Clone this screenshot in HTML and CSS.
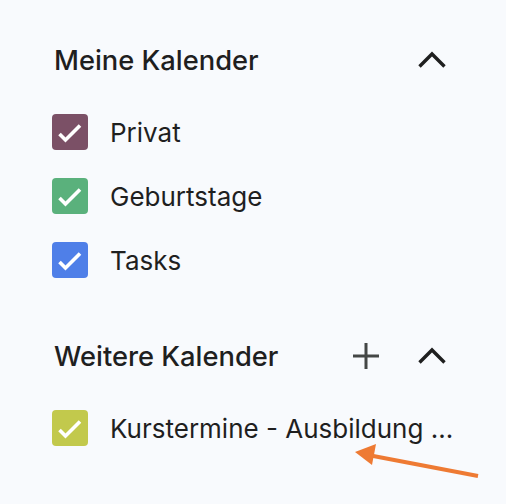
FILE: index.html
```html
<!DOCTYPE html>
<html lang="de">
<head>
    <meta charset="UTF-8">
    <meta name="viewport" content="width=device-width, initial-scale=1.0">
    <title>Kalender</title>
    <link rel="stylesheet" href="styles.css">
</head>
<body>
    <div class="sidebar">
        <div class="section">
            <div class="section-header">
                <h2>Meine Kalender</h2>
                <div class="actions">
                    <button class="icon-btn" aria-label="Einklappen">
                        <svg viewBox="0 0 48 48" width="48" height="48"><polyline points="11.5,30.5 24,18 36.5,30.5" fill="none" stroke="#1f1f1f" stroke-width="3.4"/></svg>
                    </button>
                </div>
            </div>
            <div class="cal-item">
                <span class="check privat"><svg viewBox="0 0 36 36" width="36" height="36"><polyline points="7.5,20 13.5,26 28,11.5" fill="none" stroke="#fff" stroke-width="3.6"/></svg></span>
                <span class="cal-name">Privat</span>
            </div>
            <div class="cal-item">
                <span class="check birthday"><svg viewBox="0 0 36 36" width="36" height="36"><polyline points="7.5,20 13.5,26 28,11.5" fill="none" stroke="#fff" stroke-width="3.6"/></svg></span>
                <span class="cal-name">Geburtstage</span>
            </div>
            <div class="cal-item">
                <span class="check tasks"><svg viewBox="0 0 36 36" width="36" height="36"><polyline points="7.5,20 13.5,26 28,11.5" fill="none" stroke="#fff" stroke-width="3.6"/></svg></span>
                <span class="cal-name">Tasks</span>
            </div>
        </div>

        <div class="section">
            <div class="section-header">
                <h2>Weitere Kalender</h2>
                <div class="actions">
                    <button class="icon-btn" aria-label="Hinzufügen">
                        <svg viewBox="0 0 48 48" width="48" height="48"><path d="M24 11v26M11 24h26" fill="none" stroke="#444746" stroke-width="3"/></svg>
                    </button>
                    <button class="icon-btn" aria-label="Einklappen">
                        <svg viewBox="0 0 48 48" width="48" height="48"><polyline points="11.5,30.5 24,18 36.5,30.5" fill="none" stroke="#1f1f1f" stroke-width="3.4"/></svg>
                    </button>
                </div>
            </div>
            <div class="cal-item">
                <span class="check course"><svg viewBox="0 0 36 36" width="36" height="36"><polyline points="7.5,20 13.5,26 28,11.5" fill="none" stroke="#fff" stroke-width="3.6"/></svg></span>
                <span class="cal-name">Kurstermine - Ausbildung ...</span>
            </div>
        </div>

        <!-- Markierung -->
        <svg class="marker" viewBox="0 0 506 504" width="506" height="504">
            <line x1="478" y1="476" x2="368" y2="455" stroke="#ee7a33" stroke-width="4"/>
            <polygon points="355,452 376,444 372,465" fill="#ee7a33"/>
        </svg>
    </div>
</body>
</html>
```

FILE: styles.css
```css
body {
    margin: 0;
    background-color: #f8fafd;
    font-family: Inter, Roboto, sans-serif;
    color: #1f1f1f;
}

.sidebar {
    position: relative;
    width: 506px;
    height: 504px;
    box-sizing: border-box;
    padding: 28px 50px 0 52px;
    overflow: hidden;
}

.section {
    margin-bottom: 32px;
}

.section-header {
    display: flex;
    justify-content: space-between;
    align-items: center;
    height: 64px;
    margin-bottom: 8px;
}

.section-header h2 {
    margin: 0;
    padding-left: 2px;
    font-size: 27.3px;
    font-weight: 500;
}

.actions {
    display: flex;
    gap: 18px;
}

.icon-btn {
    width: 48px;
    height: 48px;
    padding: 0;
    border: none;
    background: none;
    display: block;
}

.icon-btn svg {
    display: block;
}

.cal-item {
    display: flex;
    align-items: center;
    gap: 22px;
    height: 64px;
}

.check {
    flex: none;
    width: 36px;
    height: 36px;
    border-radius: 4px;
}

.check svg {
    display: block;
}

.privat {
    background-color: #7b5066;
}

.birthday {
    background-color: #5ab17c;
}

.tasks {
    background-color: #4f7fe8;
}

.course {
    background-color: #c2c94c;
}

.cal-name {
    font-size: 26px;
    white-space: nowrap;
}

.marker {
    position: absolute;
    left: 0;
    top: 0;
    pointer-events: none;
}
```
